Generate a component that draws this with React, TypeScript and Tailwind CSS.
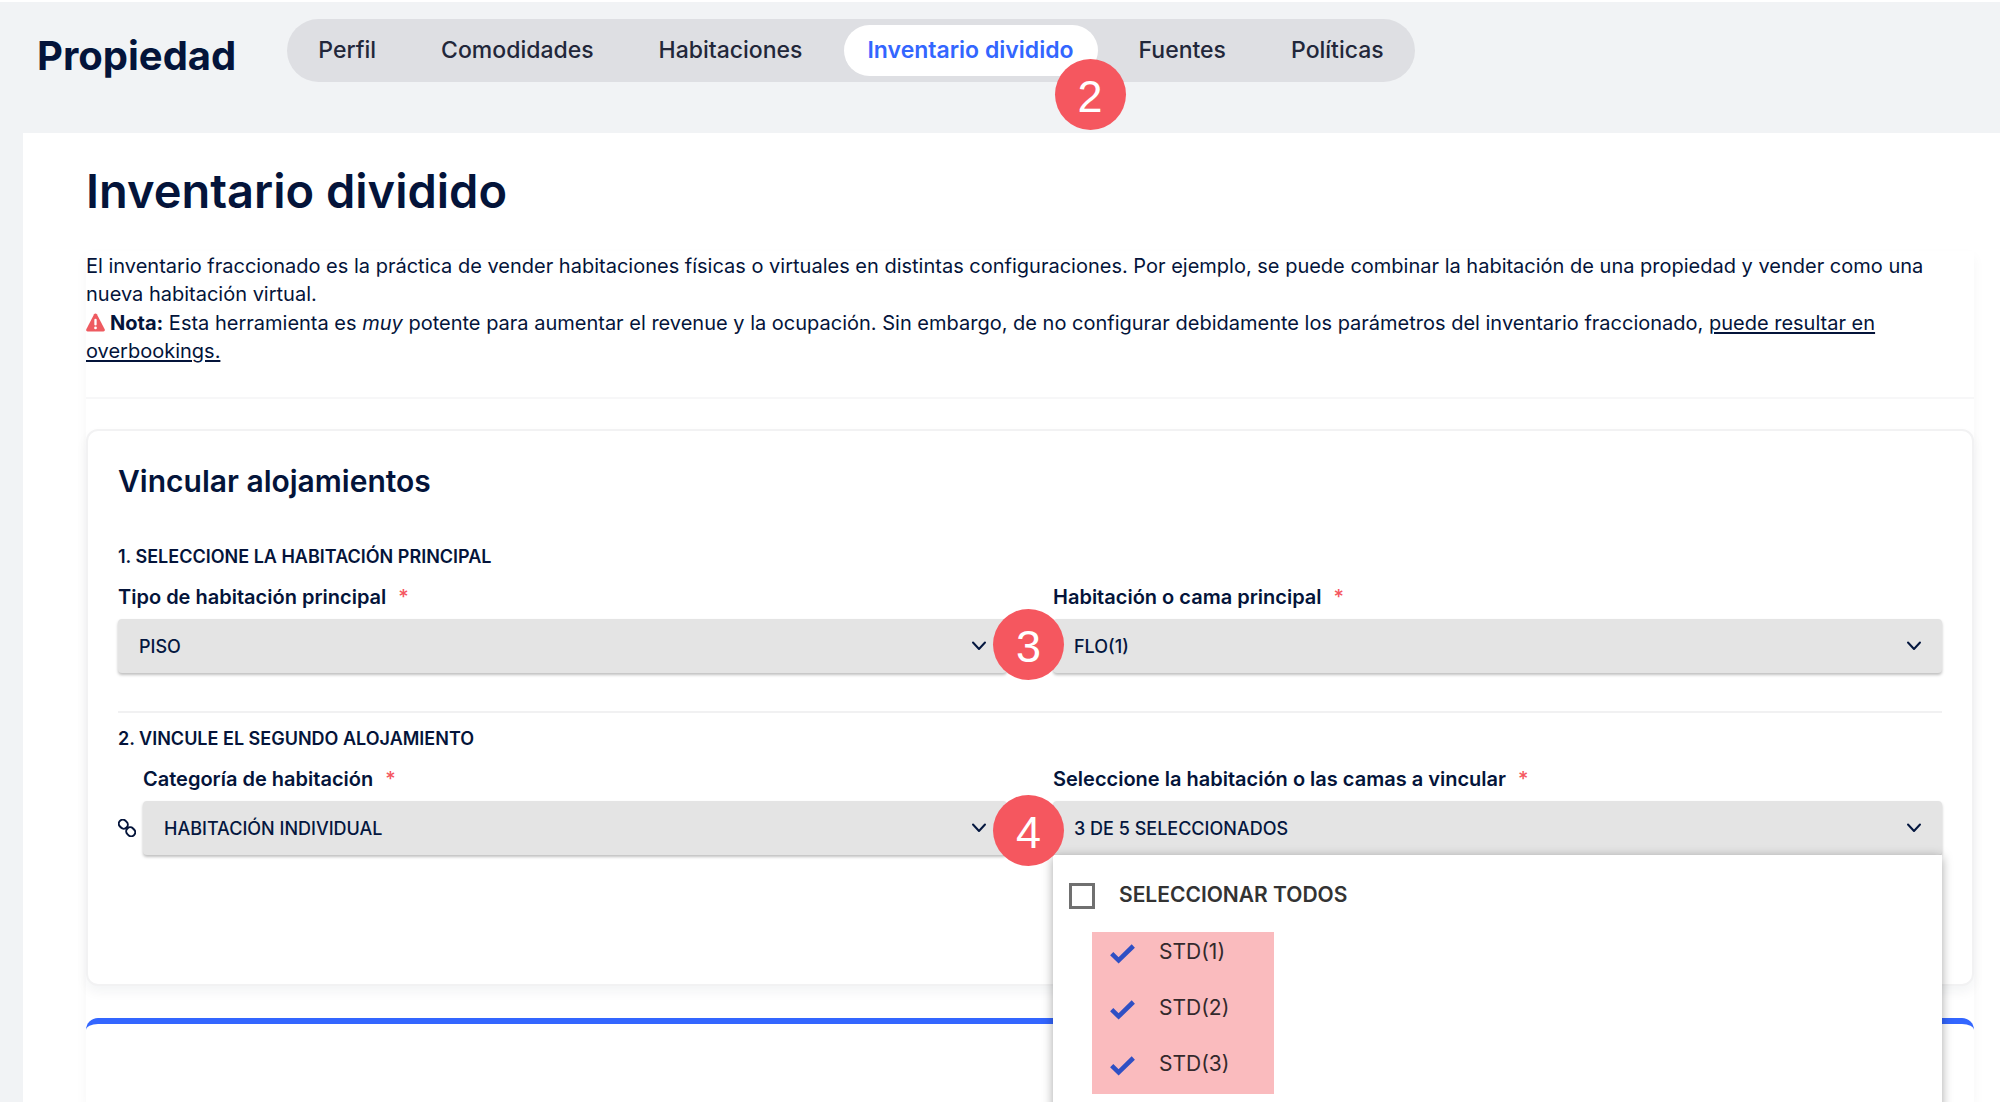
import React, { useState } from "react";

const tabs = ["Perfil", "Comodidades", "Habitaciones", "Inventario dividido", "Fuentes", "Políticas"];

function Badge({ n, className }: { n: number; className: string }) {
  return (
    <span
      className={`absolute z-20 flex size-[71px] items-center justify-center rounded-full bg-[#f5575f] pt-1 font-['Liberation_Sans',sans-serif] text-[45px] leading-none font-normal text-white ${className}`}
    >
      {n}
    </span>
  );
}

function Chevron() {
  return (
    <svg
      viewBox="0 0 16 10"
      className="pointer-events-none absolute top-1/2 right-5 h-[10px] w-4 -translate-y-1/2"
      fill="none"
      stroke="#04173f"
      strokeWidth="2"
      strokeLinecap="round"
      strokeLinejoin="round"
      aria-hidden="true"
    >
      <path d="M2 1.5 8 8 14 1.5" />
    </svg>
  );
}

function FieldLabel({ id, children }: { id: string; children: React.ReactNode }) {
  return (
    <label htmlFor={id} className="flex h-8 items-center gap-3 text-[20px] font-semibold">
      {children}
      <span className="font-medium text-[#f5575f]">*</span>
    </label>
  );
}

const control =
  "block h-[54px] w-full appearance-none rounded bg-[#e4e4e4] pl-[21px] pr-12 text-left text-[18px] font-medium text-[#04173f] shadow-[0_2px_3px_rgba(0,0,0,0.25)]";

function SelectField({ id, label, value }: { id: string; label: string; value: string }) {
  return (
    <div>
      <FieldLabel id={id}>{label}</FieldLabel>
      <div className="relative mt-1.5">
        <select id={id} className={control} defaultValue={value}>
          <option>{value}</option>
        </select>
        <Chevron />
      </div>
    </div>
  );
}

function RoomOption({ label }: { label: string }) {
  const [checked, setChecked] = useState(true);
  return (
    <label className="flex h-14 items-center gap-6 text-[21px]">
      <span className="relative mt-1 h-5 w-[25px]">
        <input
          type="checkbox"
          checked={checked}
          onChange={() => setChecked(!checked)}
          className="absolute inset-0 size-full appearance-none"
        />
        {checked && (
          <svg viewBox="0 0 25 20" className="pointer-events-none absolute inset-0" fill="none" stroke="#2f4fc4" strokeWidth="4.6" aria-hidden="true">
            <path d="M1.7 9.7 8.6 16.4 23.3 2" />
          </svg>
        )}
      </span>
      {label}
    </label>
  );
}

export default function App() {
  return (
    <div className="flex min-h-screen flex-col overflow-hidden border-t-2 border-white bg-[#f1f3f5] font-[Inter,sans-serif] text-[#04143a]">
      <header className="flex h-[131px] items-start gap-[51px] pt-[17px] pl-[37px]">
        <h1 className="text-[40px] leading-[74px] font-bold">Propiedad</h1>
        <nav className="flex h-[63px] items-center gap-[17px] rounded-full bg-[#dedfe3] px-[7px]">
          {tabs.map((t) =>
            t === "Inventario dividido" ? (
              <button key={t} type="button" aria-current="page" className="relative h-[51px] rounded-full bg-white px-6 text-[23px] font-semibold text-[#3366ff]">
                {t}
                <Badge n={2} className="top-[34px] -right-7" />
              </button>
            ) : (
              <button key={t} type="button" className="h-[51px] rounded-full px-6 text-[23px] font-medium text-[#22273a]">
                {t}
              </button>
            )
          )}
        </nav>
      </header>

      <main className="ml-[23px] flex flex-1 flex-col bg-white pr-[26px] pl-[63px]">
        <h2 className="pt-[30px] text-[47px] leading-[56px] font-semibold">Inventario dividido</h2>
        <section className="mt-8 flex flex-1 flex-col shadow-[0_6px_12px_rgba(20,40,40,0.04)]">
          <div className="border-b-2 border-[#f7f7f8] pt-px pb-8 text-[20px] leading-7">
            <p>
              El inventario fraccionado es la práctica de vender habitaciones físicas o virtuales en distintas configuraciones. Por ejemplo, se puede combinar la habitación de una propiedad y vender como una nueva habitación virtual.
            </p>
            <p className="pt-px">
              <svg viewBox="0 0 18 18" className="mr-[5px] inline-block size-[19px] align-[-2px]" aria-hidden="true">
                <path fill="#ee5a60" d="M9 0.5c.6 0 1 .3 1.3.8l7.4 14.2c.5 1-.1 2-1.2 2h-15c-1.1 0-1.7-1-1.2-2L7.7 1.3C8 .8 8.4.5 9 .5Z" />
                <path stroke="#fff" strokeWidth="2.2" strokeLinecap="round" d="M9 6.5v4.3" />
                <circle cx="9" cy="14.2" r="1.3" fill="#fff" />
              </svg>
              <strong className="font-bold">Nota:</strong> Esta herramienta es <em>muy</em> potente para aumentar el revenue y la ocupación. Sin embargo, de no configurar debidamente los parámetros del inventario fraccionado,{" "}
              <a href="#overbookings" className="underline underline-offset-2">puede resultar en overbookings.</a>
            </p>
          </div>

          <div className="mt-[30px] h-[557px] rounded-xl border-2 border-[#f2f2f3] bg-white px-[30px] shadow-[0_6px_12px_rgba(20,30,60,0.05)]">
            <h3 className="pt-8 text-[30px] leading-9 font-semibold">Vincular alojamientos</h3>

            <h4 className="mt-[42px] text-[18px] leading-8 font-semibold">1. SELECCIONE LA HABITACIÓN PRINCIPAL</h4>
            <div className="mt-2 grid grid-cols-2 gap-[46px]">
              <SelectField id="main-type" label="Tipo de habitación principal" value="PISO" />
              <div className="relative">
                <SelectField id="main-room" label="Habitación o cama principal" value="FLO(1)" />
                <Badge n={3} className="top-7 -left-[60px]" />
              </div>
            </div>

            <h4 className="mt-[38px] border-t-2 border-[#f1f1f2] pt-2.5 text-[18px] leading-8 font-semibold">2. VINCULE EL SEGUNDO ALOJAMIENTO</h4>
            <div className="mt-2 grid grid-cols-2 gap-[46px]">
              <div className="flex items-end gap-2">
                <span className="flex h-[54px] w-[17px] items-center">
                  <svg viewBox="0 0 18 18" className="size-[18px] shrink-0" fill="none" stroke="#04143a" strokeWidth="2" aria-hidden="true">
                    <rect x="0.6" y="1.2" width="9.4" height="8" rx="4" transform="rotate(45 5.3 5.2)" />
                    <rect x="8" y="8.8" width="9.4" height="8" rx="4" transform="rotate(45 12.7 12.8)" />
                  </svg>
                </span>
                <div className="flex-1">
                  <SelectField id="linked-category" label="Categoría de habitación" value="HABITACIÓN INDIVIDUAL" />
                </div>
              </div>
              <div className="relative">
                <FieldLabel id="linked-rooms">Seleccione la habitación o las camas a vincular</FieldLabel>
                <div className="relative mt-1.5">
                  <button id="linked-rooms" type="button" aria-expanded="true" className={control}>
                    3 DE 5 SELECCIONADOS
                  </button>
                  <Chevron />
                </div>
                <Badge n={4} className="top-8 -left-[60px]" />
                <div className="absolute inset-x-0 top-full z-10 bg-white pb-16 text-[#333] shadow-[0_2px_10px_rgba(0,0,0,0.35)]">
                  <label className="flex h-[77px] items-center gap-6 pt-0.5 pl-4 text-[21px] font-semibold">
                    <input type="checkbox" className="mt-0.5 size-[26px] appearance-none border-[3px] border-[#707070] bg-white" />
                    SELECCIONAR TODOS
                  </label>
                  <div className="ml-[39px] flex w-[182px] flex-col bg-[#fabbbe] pb-0.5 pl-[18px] text-[#33292c]">
                    <div className="-mt-2 flex flex-col">
                      <RoomOption label="STD(1)" />
                      <RoomOption label="STD(2)" />
                      <RoomOption label="STD(3)" />
                    </div>
                  </div>
                </div>
              </div>
            </div>
          </div>

          <div className="mt-8 flex-1 rounded-t-xl border-t-[6px] border-[#3366ff] bg-white" />
        </section>
      </main>
    </div>
  );
}
